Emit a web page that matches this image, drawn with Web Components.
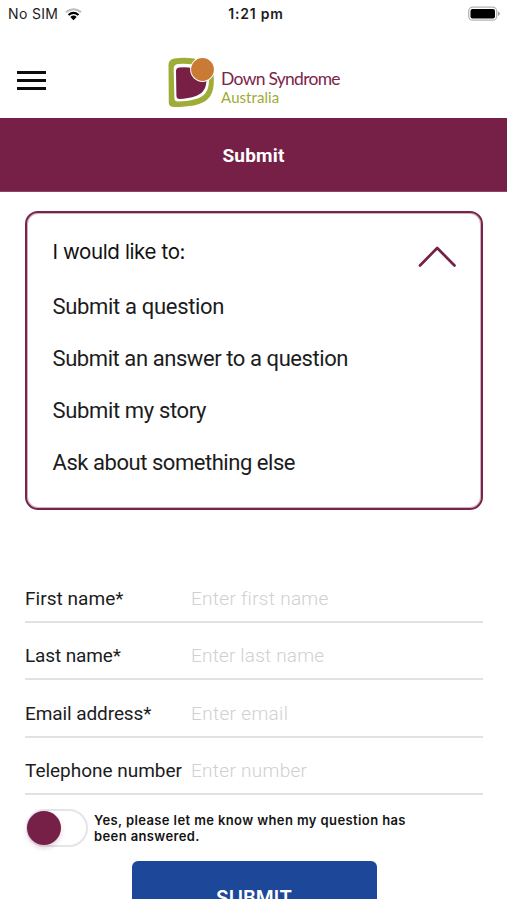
<!DOCTYPE html>
<html lang="en">
<head>
<meta charset="utf-8">
<title>Submit</title>
<style>
html,body{margin:0;height:900px;overflow:hidden;background:#fff}
body{font-family:Roboto,"Liberation Sans",sans-serif;color:#1c1c1e}
</style>
</head>
<body>
<submit-screen></submit-screen>
<script>
const define = (name, html, setup) => {
  const t = document.createElement('template');
  t.innerHTML = html;
  customElements.define(name, class extends HTMLElement {
    connectedCallback() {
      if (this.shadowRoot) return;
      this.attachShadow({mode: 'open'}).append(t.content.cloneNode(true));
      if (setup) setup(this, this.shadowRoot);
    }
  });
};

/* A single line of text tracked out or in to a given advance width. */
define('text-line', `
<style>:host{display:inline-block;white-space:nowrap}span{display:inline-block}</style>
<span><slot></slot></span>`, (el, root) => {
  const s = root.querySelector('span');
  const n = el.textContent.length;
  const gap = (Number(el.getAttribute('width')) - s.getBoundingClientRect().width) / (n - 1);
  s.style.letterSpacing = gap.toFixed(3) + 'px';
});

define('status-bar', `
<style>
:host{display:grid;grid-template-columns:1fr auto 1fr;align-items:center;height:28px;padding:0 7px 0 8px;box-sizing:border-box;font:14px/28px Inter,sans-serif;color:#1c1c1e}
.l{display:flex;align-items:center;gap:7px}
.t{font-weight:600;padding-left:4px}
.b{justify-self:end;display:flex}
svg{display:block}
</style>
<div class="l"><text-line width="50">No SIM</text-line>
<svg width="17" height="13" viewBox="0 0 17 13" fill="none" stroke-width="2.1"><path d="M1 4.2Q8.500-1.700 16 4.200" stroke="#bcbcbc"/><path d="M3.500 7Q8.500 2.900 13.500 7" stroke="#000"/><path d="M5.300 8.900Q8.500 6.300 11.700 8.900L8.500 12.200Z" fill="#000"/></svg></div>
<div class="t"><text-line width="54.500">1:21 pm</text-line></div>
<div class="b"><svg width="32" height="16" viewBox="0 0 32 16"><rect x=".7" y="1.200" width="28" height="13" rx="4" fill="#fff" stroke="#b4b4b4" stroke-width="1.300"/><rect x="2.500" y="3" width="24.500" height="9.500" rx="2" fill="#000"/><path d="M30 5.500q1.800.8 1.800 2.300t-1.800 2.300z" fill="#999"/></svg></div>`);

define('brand-logo', `
<style>
:host{display:flex;gap:6px;font-family:Lato,sans-serif}
svg{display:block}
.n{padding-top:13px}
.n div{height:18px;line-height:18px}
.d{font-size:17.500px;color:#7b2449}
.a{font-size:15px;color:#9eab35}
</style>
<svg width="47" height="52" viewBox="0 0 47 52">
<path d="M6.500 1.500Q16 0 26 1.600Q45 7 45.800 21C46.500 42 38 50 6.500 50Q1 50 .8 46L.5 8Q.4 2.500 6.500 1.500Z" fill="#9fac37"/>
<path d="M10 7Q18 6.500 26 7.500Q40 11 41 22C41 38 34 43.500 10 44.500Q6.600 44.600 6.400 41L5.700 12Q5.600 7.500 10 7Z" fill="#fff"/>
<path d="M11 10.500Q18 9.600 24 11L38.500 23C38 36 31 40.500 12 42Q8.500 42.200 8.400 38.500L8 14Q8 11 11 10.500Z" fill="#781f46"/>
<circle cx="34.500" cy="12.500" r="12.400" fill="#fff"/><circle cx="34.500" cy="12.500" r="11.400" fill="#c97a35"/>
</svg>
<div class="n"><div class="d"><text-line width="119.500">Down Syndrome</text-line></div><div class="a"><text-line width="58">Australia</text-line></div></div>`);

define('app-header', `
<style>
:host{display:grid;grid-template-columns:1fr auto 1fr;height:90px;padding:0 16px 0 17px;box-sizing:border-box}
.m{display:grid;gap:5px;width:29px;margin-top:43px;align-content:start}
.m i{display:block;height:3px;background:#0c0c0c}
brand-logo{margin-top:29px}
</style>
<div class="m"><i></i><i></i><i></i></div><brand-logo></brand-logo><div></div>`);

define('title-bar', `
<style>:host{display:flex;align-items:center;justify-content:center;height:73px;padding-top:2px;box-sizing:border-box;border-bottom:1px solid #8b4568;background:#762048;color:#fff;font:700 19px/24px Roboto,sans-serif}:host{height:74px}</style>
<slot></slot>`);

define('choice-panel', `
<style>
:host{display:block;margin:19px 24px 0 25px;height:299px;box-sizing:border-box;border:2px solid #782349;box-shadow:inset 0 0 0 1px #78234959;border-radius:13px;padding:19px 25px 0 25.500px}
.h{display:flex;justify-content:space-between;height:40px;font:20.500px/40px Inter,sans-serif;color:#111}
svg{display:block;margin:13px 0 0}
.o{display:grid;grid-auto-rows:52px;margin-top:9px;font-size:22px;line-height:52px}
</style>
<div class="h"><slot name="heading"></slot><svg width="38" height="23" viewBox="0 0 38 23" fill="none" stroke="#762048" stroke-width="2.700" stroke-linecap="round" stroke-linejoin="round"><path d="M2 20.500L19.200 3L36.500 20.500"/></svg></div>
<div class="o"><slot></slot></div>`);

define('form-row', `
<style>
:host{display:grid;grid-template-columns:166px 1fr;height:57.500px;box-sizing:border-box;border-bottom:2px solid #e1e1e3;align-items:end;font-size:19px;line-height:43px}
div{padding-bottom:1px}
.p{color:#d0d0d2;font-weight:300}
</style>
<div><slot></slot></div><div class="p"><slot name="hint"></slot></div>`);

define('toggle-row', `
<style>
:host{display:flex;gap:6px;margin:14px 25px 0 26px;height:38px}
.s{width:62px;height:38px;box-sizing:border-box;border:2px solid #e5e5e8;border-radius:19px;flex:none}
.k{width:34px;height:34px;margin-left:-1px;border-radius:50%;background:#762048;box-shadow:0 3px 5px #76204830}
.t{font:600 13px/16px Inter,sans-serif;color:#141414;padding-top:3px;display:grid;align-content:start}
</style>
<div class="s"><div class="k"></div></div><div class="t"><slot></slot></div>`);

define('submit-button', `
<style>
:host{display:block;width:245px;height:38px;overflow:hidden;margin:14px 0 0 131.500px;border-radius:6px 6px 0 0;background:#1d4799;color:#fff;font:600 19.500px/24px Inter,sans-serif;text-align:center}
div{padding-top:25px}
</style><div><slot></slot></div>`);

define('submit-screen', `
<style>
:host{display:block;width:507px;height:900px;overflow:hidden;background:#fff}
form{display:block;margin:55px 24px 0 25px}
</style>
<status-bar></status-bar>
<app-header></app-header>
<title-bar><text-line width="62">Submit</text-line></title-bar>
<choice-panel>
<text-line slot="heading" width="133">I would like to:</text-line>
<text-line width="172">Submit a question</text-line>
<text-line width="296">Submit an answer to a question</text-line>
<text-line width="154">Submit my story</text-line>
<text-line width="243">Ask about something else</text-line>
</choice-panel>
<form>
<form-row><text-line width="98.500">First name*</text-line><text-line slot="hint" width="137">Enter first name</text-line></form-row>
<form-row><text-line width="96">Last name*</text-line><text-line slot="hint" width="133">Enter last name</text-line></form-row>
<form-row><text-line width="126.500">Email address*</text-line><text-line slot="hint" width="97">Enter email</text-line></form-row>
<form-row><text-line width="157">Telephone number</text-line><text-line slot="hint" width="116">Enter number</text-line></form-row>
</form>
<toggle-row><text-line width="311.500">Yes, please let me know when my question has</text-line><text-line width="105.500">been answered.</text-line></toggle-row>
<submit-button><text-line width="76">SUBMIT</text-line></submit-button>`);
</script>
</body>
</html>
